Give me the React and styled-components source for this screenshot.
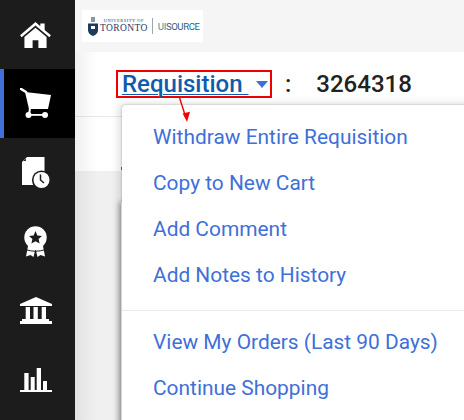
import React from 'react';
import styled, { createGlobalStyle } from 'styled-components';

const GlobalStyle = createGlobalStyle`
  html, body { margin: 0; padding: 0; background: #fff; }
  body { font-family: Roboto, "Liberation Sans", sans-serif; overflow: hidden; }
`;

const Page = styled.div`
  display: flex;
  width: 464px;
  height: 420px;
  overflow: hidden;
`;

const Sidebar = styled.nav`
  flex: 0 0 75px;
  background: #1c1c1c;
  display: flex;
  flex-direction: column;
`;

const NavItem = styled.div`
  height: 69px;
  padding-right: 4px;
  box-sizing: border-box;
  display: flex;
  align-items: center;
  justify-content: center;
  background: ${p => (p.$active ? '#000' : 'transparent')};
  box-shadow: ${p => (p.$active ? 'inset 4px 0 0 #3f6fd8' : 'none')};
  svg { display: block; color: #fff; }
`;

const Main = styled.main`
  flex: 1;
  position: relative;
  background: #f0f0f0;
  &::before {
    content: '';
    position: absolute;
    left: 0;
    top: 52px;
    bottom: 0;
    width: 22px;
    background: linear-gradient(to right, rgba(0, 0, 0, 0.06), rgba(0, 0, 0, 0));
  }
`;

const TopBar = styled.div`
  height: 52px;
  background: #f5f5f5;
  padding: 10px 0 0 7px;
  box-sizing: border-box;
`;

const Logo = styled.div`
  width: 121px;
  height: 32px;
  background: #fff;
  display: flex;
  align-items: center;
  padding-left: 6px;
  box-sizing: border-box;
  gap: 2px;
  overflow: hidden;
`;

const LogoWords = styled.div`
  display: flex;
  flex-direction: column;
  align-items: center;
  font-family: "Liberation Serif", serif;
  color: #1f3a5f;
  line-height: 1;
`;

const LogoSmall = styled.span`
  font-size: 4.5px;
  letter-spacing: 0.5px;
`;

const LogoBig = styled.span`
  font-size: 9.5px;
  letter-spacing: 0.4px;
`;

const LogoDivider = styled.span`
  width: 1px;
  height: 16px;
  background: #9aa7b0;
  margin: 0 3px 0 2px;
`;

const LogoBrand = styled.span`
  font-size: 9.6px;
  letter-spacing: -0.4px;
  color: #2c5f88;
`;

const LogoTeal = styled.span`
  color: #1f9bb0;
`;

const HeaderRow = styled.div`
  height: 64px;
  background: #fff;
  border-bottom: 1px solid #e8e8e8;
  display: flex;
  align-items: center;
  padding: 0 0 0 41px;
`;

const TitleBox = styled.div`
  border: 2px solid #f00000;
  width: 156px;
  height: 28px;
  box-sizing: border-box;
  display: flex;
  align-items: center;
  padding-left: 4px;
  flex: none;
`;

const TitleLink = styled.a`
  font-size: 24px;
  font-weight: 500;
  color: #0f5cae;
  text-decoration: underline;
  text-decoration-thickness: 1px;
  text-underline-offset: 2px;
  white-space: pre;
`;

const Caret = styled.span`
  width: 0;
  height: 0;
  margin-left: 7px;
  border-left: 6.5px solid transparent;
  border-right: 6.5px solid transparent;
  border-top: 7px solid #3f6fd8;
`;

const Colon = styled.span`
  margin-left: 13px;
  font-size: 24px;
  font-weight: 500;
  color: #222;
`;

const ReqNumber = styled.span`
  margin-left: 25px;
  font-size: 24px;
  font-weight: 500;
  color: #222;
`;

const SubRow = styled.div`
  height: 54px;
  background: #fff;
`;

const MenuBackPanel = styled.div`
  position: absolute;
  left: 46px;
  top: 202px;
  width: 100px;
  height: 240px;
  background: #fff;
  box-shadow: -2px 0 5px rgba(0, 0, 0, 0.32);
`;

const Menu = styled.div`
  position: absolute;
  left: 47px;
  top: 105px;
  width: 360px;
  height: 340px;
  background: #fff;
  border-radius: 4px 0 0 0;
  box-shadow: 0 0 2px rgba(0, 0, 0, 0.3), -3px -1px 8px rgba(0, 0, 0, 0.14);
  padding-top: 9px;
  box-sizing: border-box;
`;

const MenuItem = styled.div`
  height: 46px;
  padding-left: 31px;
  display: flex;
  align-items: center;
  font-size: 20.9px;
  color: #3f6fd8;
  white-space: nowrap;
`;

const MenuDivider = styled.div`
  height: 1px;
  background: #e9ecef;
  margin: 12px 0 8px;
`;

const BlueSpeck = styled.span`
  position: absolute;
  left: 46px;
  top: 167px;
  width: 1px;
  height: 3px;
  background: #3f6fd8;
`;

const ArrowMark = styled.svg`
  position: absolute;
  left: 103px;
  top: 95px;
`;

const HomeIcon = () => (
  <svg width="31" height="26" viewBox="0 0 32 27" fill="currentColor">
    <path d="M16 0 L21 4.3 V1.5 H25.5 V8.2 L32 13.8 L30.4 15.8 L16 3.6 L1.6 15.8 L0 13.8 Z" />
    <path d="M16 6 L27.5 15.6 V27 H19 V19 H13 V27 H4.5 V15.6 Z" />
  </svg>
);

const CartIcon = () => (
  <svg width="31" height="31" viewBox="0 0 31 31" fill="currentColor">
    <path d="M1 1 L6 4" fill="none" stroke="currentColor" strokeWidth="2.6" strokeLinecap="round" />
    <path d="M5 4 L31 7 L28 21 L9 21 Z" />
    <path d="M10 20 L9 27" fill="none" stroke="currentColor" strokeWidth="2" />
    <rect x="8" y="26" width="17" height="1.8" />
    <circle cx="8.5" cy="27" r="3" />
    <circle cx="25" cy="27" r="3" />
  </svg>
);

const DocClockIcon = () => (
  <svg width="28" height="31" viewBox="0 0 28 31">
    <path d="M5 0 H22.5 V28 H0 V5 Z" fill="#fff" />
    <path d="M3.8 1.5 V4 H1.2 Z" fill="#1c1c1c" />
    <circle cx="19.5" cy="23" r="9.6" fill="#1c1c1c" />
    <circle cx="19.5" cy="23" r="8" fill="#fff" />
    <path d="M18.5 17.5 V23 L22 26" fill="none" stroke="#1c1c1c" strokeWidth="1.5" />
  </svg>
);

const AwardIcon = () => (
  <svg width="23" height="31" viewBox="0 0 23 31">
    <path d="M4 20 L2 30.5 L6.5 29 L9.5 31 L11.2 24 L11.8 24 L13.5 31 L16.5 29 L21 30.5 L19 20 Z" fill="#fff" />
    <circle cx="11.5" cy="11.5" r="11.2" fill="#fff" />
    <path d="M11.5 5 L13.4 9.4 L18 9.9 L14.6 13 L15.6 17.6 L11.5 15.2 L7.4 17.6 L8.4 13 L5 9.9 L9.6 9.4 Z" fill="#1c1c1c" />
    <path d="M1.5 23.5 Q11.5 27 21.5 23.5" fill="none" stroke="#1c1c1c" strokeWidth="1" />
  </svg>
);

const BankIcon = () => (
  <svg width="32" height="27" viewBox="0 0 32 27" fill="currentColor">
    <path d="M16 0 L32 7 V9 H0 V7 Z" />
    <rect x="5.7" y="10" width="4.3" height="12" />
    <rect x="13.5" y="10" width="4.3" height="12" />
    <rect x="21.7" y="10" width="4.3" height="12" />
    <rect x="2" y="22" width="27" height="2" />
    <rect x="0" y="24" width="32" height="3" />
  </svg>
);

const BarsIcon = () => (
  <svg width="32" height="24" viewBox="0 0 32 24" fill="currentColor">
    <rect x="4.3" y="5" width="4.3" height="17" />
    <rect x="10.7" y="9" width="4" height="13" />
    <rect x="16.7" y="0" width="4.3" height="22" />
    <rect x="23" y="13" width="4" height="9" />
    <rect x="0" y="22" width="32" height="2" />
  </svg>
);

const navIcons = [HomeIcon, CartIcon, DocClockIcon, AwardIcon, BankIcon, BarsIcon];

const menuTop = ['Withdraw Entire Requisition', 'Copy to New Cart', 'Add Comment', 'Add Notes to History'];
const menuBottom = ['View My Orders (Last 90 Days)', 'Continue Shopping'];

export default function App() {
  return (
    <Page>
      <GlobalStyle />
      <Sidebar>
        {navIcons.map((Icon, i) => (
          <NavItem key={i} $active={i === 1}>
            <Icon />
          </NavItem>
        ))}
      </Sidebar>
      <Main>
        <TopBar>
          <Logo>
            <svg width="10" height="19" viewBox="0 0 10 19">
              <rect x="3" y="0" width="4" height="5" fill="#8a96a3" />
              <path d="M0 6.5 H10 V13 Q10 17 5 19 Q0 17 0 13 Z" fill="#1f3a5f" />
              <rect x="3" y="9" width="4" height="3" fill="#fff" />
            </svg>
            <LogoWords>
              <LogoSmall>UNIVERSITY OF</LogoSmall>
              <LogoBig>TORONTO</LogoBig>
            </LogoWords>
            <LogoDivider />
            <LogoBrand>
              <LogoTeal>UI</LogoTeal>SOURCE
            </LogoBrand>
          </Logo>
        </TopBar>
        <HeaderRow>
          <TitleBox>
            <TitleLink>Requisition </TitleLink>
            <Caret />
          </TitleBox>
          <Colon>:</Colon>
          <ReqNumber>3264318</ReqNumber>
        </HeaderRow>
        <SubRow />
        <BlueSpeck />
        <MenuBackPanel />
        <Menu>
          {menuTop.map(label => (
            <MenuItem key={label}>{label}</MenuItem>
          ))}
          <MenuDivider />
          {menuBottom.map(label => (
            <MenuItem key={label}>{label}</MenuItem>
          ))}
        </Menu>
        <ArrowMark width="14" height="30" viewBox="0 0 14 30">
          <path d="M1 1 L7 20" stroke="#f00000" strokeWidth="1.4" />
          <path d="M4.7 18.5 L12 16.7 L9 27 Z" fill="#f00000" />
        </ArrowMark>
      </Main>
    </Page>
  );
}
